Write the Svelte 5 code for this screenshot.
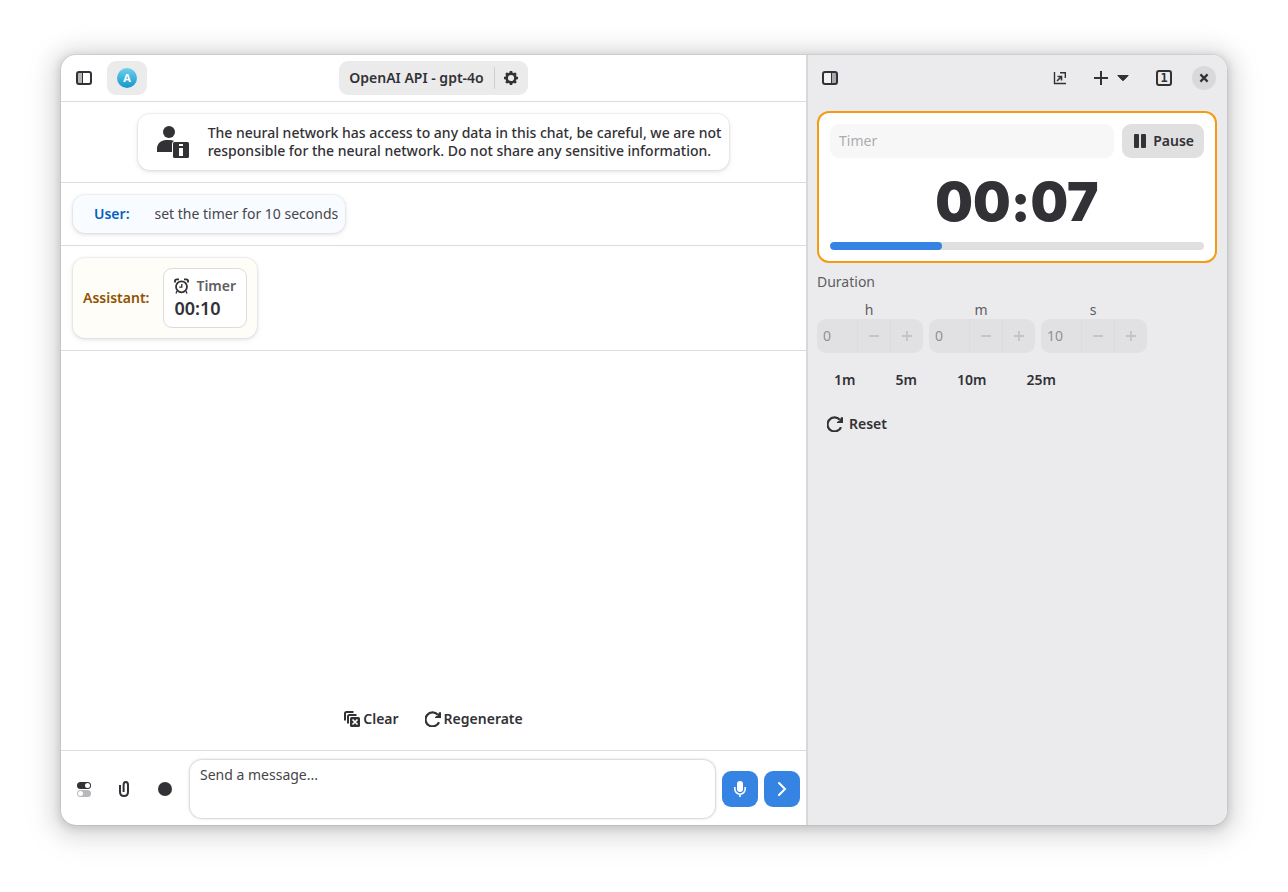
<script>
  let message = $state('');
  let title = $state('');
  const elapsed = 30;
  const fields = [
    { unit: 'h', value: 0 },
    { unit: 'm', value: 0 },
    { unit: 's', value: 10 }
  ];
  const presets = ['1m', '5m', '10m', '25m'];
</script>

{#snippet reload()}
  <svg width="16" height="16" viewBox="0 0 16 16" aria-hidden="true">
    <path d="M14 11.2A7 7 0 1 1 12.8 3.8" fill="none" stroke="currentColor" stroke-width="2.2" />
    <path d="M16 1.2V7H10V6L12.6 4.6L14 1.2Z" fill="currentColor" />
  </svg>
{/snippet}

<div class="window">
  <main class="chat">
    <header class="bar">
      <div class="start">
        <button class="flat" aria-label="Toggle sidebar">
          <svg width="16" height="16" viewBox="0 0 16 16">
            <rect x="1.5" y="2.5" width="5" height="11" fill="#b5b4ba" />
            <rect x="1" y="2" width="14" height="12" rx="2" fill="none" stroke="currentColor" stroke-width="2" />
            <path d="M6.5 2V14" stroke="currentColor" />
          </svg>
        </button>
        <button class="profile" aria-label="Profile"><span class="avatar">A</span></button>
      </div>
      <div class="model">
        <button class="name">OpenAI API - gpt-4o</button>
        <span class="split"></span>
        <button class="gear" aria-label="Settings">
          <svg width="16" height="16" viewBox="0 0 16 16">
            <circle cx="8" cy="8" r="4.4" fill="none" stroke="currentColor" stroke-width="2.6" />
            <path d="M8 1V3.2M8 12.8V15M1 8H3.2M12.8 8H15M3.1 3.1L4.6 4.6M11.4 11.4L12.9 12.9M3.1 12.9L4.6 11.4M11.4 4.6L12.9 3.1" stroke="currentColor" stroke-width="2.6" />
          </svg>
        </button>
      </div>
      <div></div>
    </header>

    <section class="row center">
      <div class="card notice">
        <svg width="32" height="32" viewBox="0 0 32 32" aria-hidden="true">
          <circle cx="12" cy="6" r="6" fill="currentColor" />
          <path d="M0 24V26H15V18Q15 15.5 17.2 15Q15 14 12 14H9C4 14 0 18 0 22.5Z" fill="currentColor" />
          <rect x="16" y="16" width="16" height="16" rx="1.5" fill="currentColor" />
          <path d="M22 18H26V20H22ZM22 22H26V30H22Z" fill="#fff" />
        </svg>
        <p>The neural network has access to any data in this chat, be careful, we are not<br />responsible for the neural network. Do not share any sensitive information.</p>
      </div>
    </section>

    <section class="row">
      <div class="card user">
        <b>User:</b>
        <span>set the timer for 10 seconds</span>
      </div>
    </section>

    <section class="row">
      <div class="card assistant">
        <b>Assistant:</b>
        <div class="widget">
          <div class="caption">
            <svg width="16" height="16" viewBox="0 0 16 16" aria-hidden="true">
              <circle cx="7.5" cy="8.8" r="5.5" fill="none" stroke="currentColor" stroke-width="1.8" />
              <path d="M1 4.6V3Q1 1.4 2.8 1.4H5M14 4.6V3Q14 1.4 12.2 1.4H10" fill="none" stroke="currentColor" stroke-width="1.9" />
              <path d="M7.8 6V9.2H5.2M3 13L2 15.4M12 13L13 15.4" fill="none" stroke="currentColor" stroke-width="1.3" />
            </svg>
            <span>Timer</span>
          </div>
          <strong>00:10</strong>
        </div>
      </div>
    </section>

    <div class="actions">
      <button>
        <svg width="16" height="16" viewBox="0 0 16 16" aria-hidden="true">
          <path d="M1 9.5V2.5Q1 1 2.5 1H9.5M4 12.5V5.5Q4 4 5.5 4H12.5" fill="none" stroke="currentColor" stroke-width="2" />
          <rect x="6" y="6" width="10" height="10" rx="1.5" fill="currentColor" />
          <path d="M8.5 8.5L13.5 13.5M13.5 8.5L8.5 13.5" stroke="#fff" stroke-width="1.7" />
        </svg>
        Clear
      </button>
      <button>{@render reload()}Regenerate</button>
    </div>

    <footer class="composer">
      <div class="tools">
        <button class="flat" aria-label="Options">
          <svg width="16" height="16" viewBox="0 0 16 16">
            <rect x="1" y="1" width="14" height="7" rx="3.5" fill="currentColor" />
            <circle cx="11.5" cy="4.5" r="2.5" fill="#fff" />
            <rect x="1" y="9" width="14" height="7" rx="3.5" fill="#b9b8bc" />
            <circle cx="4.5" cy="12.5" r="2.5" fill="#fff" />
          </svg>
        </button>
        <button class="flat" aria-label="Attach file">
          <svg width="16" height="16" viewBox="0 0 16 16">
            <path d="M4 4V11Q4 15 8 15Q12 15 12 11V4Q12 1 9.8 1Q7.6 1 7.6 4V11" fill="none" stroke="currentColor" stroke-width="2" />
          </svg>
        </button>
        <button class="flat" aria-label="Record">
          <svg width="16" height="16" viewBox="0 0 16 16"><circle cx="9" cy="8" r="7" fill="currentColor" /></svg>
        </button>
      </div>
      <textarea aria-label="Message" placeholder="Send a message..." bind:value={message}></textarea>
      <button class="blue" aria-label="Voice input">
        <svg width="16" height="16" viewBox="0 0 16 16">
          <rect x="5" y="0" width="6" height="11" rx="3" fill="currentColor" />
          <path d="M2.8 6V8A5.2 5.2 0 0 0 13.2 8V6M8 13V16" fill="none" stroke="currentColor" stroke-width="1.6" />
        </svg>
      </button>
      <button class="blue" aria-label="Send">
        <svg width="16" height="16" viewBox="0 0 16 16">
          <path d="M5 2L11 8L5 14" fill="none" stroke="currentColor" stroke-width="2" stroke-linecap="round" />
        </svg>
      </button>
    </footer>
  </main>

  <aside class="panel">
    <header class="bar2">
      <button class="flat" aria-label="Toggle panel">
        <svg width="16" height="16" viewBox="0 0 16 16">
          <rect x="1.5" y="2.5" width="13" height="11" fill="#f1f1f2" />
          <rect x="10" y="2.5" width="4.5" height="11" fill="#a9a8ae" />
          <rect x="1" y="2" width="14" height="12" rx="2" fill="none" stroke="currentColor" stroke-width="2" />
          <path d="M9.5 2V14" stroke="currentColor" />
        </svg>
      </button>
      <div class="end">
        <button class="flat" aria-label="Open in window">
          <svg width="16" height="16" viewBox="0 0 16 16">
            <path d="M2.5 2V13.5H14M8 2.7H13.3V8" fill="none" stroke="currentColor" stroke-width="1.4" />
            <path d="M5 11L9 7M5.5 6.5H9.5V10.5" fill="none" stroke="currentColor" stroke-width="1.6" />
          </svg>
        </button>
        <div class="add">
          <button aria-label="New tab">
            <svg width="16" height="16" viewBox="0 0 16 16"><path d="M8 1V15M1 8H15" stroke="currentColor" stroke-width="2" /></svg>
          </button>
          <button aria-label="New tab menu">
            <svg width="16" height="16" viewBox="0 0 16 16"><path d="M2.8 5.5H13.2L8.4 10.5Q8 10.9 7.6 10.5Z" fill="currentColor" stroke="currentColor" stroke-linejoin="round" /></svg>
          </button>
        </div>
        <button class="flat" aria-label="Tabs">
          <span class="count">1</span>
        </button>
        <button class="close" aria-label="Close">
          <svg width="16" height="16" viewBox="0 0 16 16"><path d="M4.4 4.4L11.6 11.6M11.6 4.4L4.4 11.6" stroke="currentColor" stroke-width="2.2" /></svg>
        </button>
      </div>
    </header>

    <div class="content">
      <section class="timer">
        <div class="head">
          <input type="text" aria-label="Timer name" placeholder="Timer" bind:value={title} />
          <button class="pause">
            <svg width="16" height="16" viewBox="0 0 16 16" aria-hidden="true">
              <rect x="2" y="1" width="5" height="14" rx="1" fill="currentColor" />
              <rect x="9" y="1" width="5" height="14" rx="1" fill="currentColor" />
            </svg>
            Pause
          </button>
        </div>
        <div class="time">00:07</div>
        <div class="track"><div class="fill" style="width: {elapsed}%"></div></div>
      </section>

      <div class="heading">Duration</div>
      <div class="spins">
        {#each fields as f}
          <div class="field">
            <label for="dur-{f.unit}">{f.unit}</label>
            <div class="spin">
              <input id="dur-{f.unit}" type="text" value={f.value} disabled />
              <button disabled aria-label="Decrease">
                <svg width="16" height="16" viewBox="0 0 16 16"><path d="M3 8H13" stroke="currentColor" stroke-width="2" /></svg>
              </button>
              <button disabled aria-label="Increase">
                <svg width="16" height="16" viewBox="0 0 16 16"><path d="M3 8H13M8 3V13" stroke="currentColor" stroke-width="2" /></svg>
              </button>
            </div>
          </div>
        {/each}
      </div>
      <div class="presets">
        {#each presets as p}<button>{p}</button>{/each}
      </div>
      <button class="reset">{@render reload()}Reset</button>
    </div>
  </aside>
</div>

<style>
  :global(body) { background: #fff; }
  * { box-sizing: border-box; }
  button, input, textarea {
    font: inherit;
    color: inherit;
    border: 0;
    background: none;
    padding: 0;
    margin: 0;
  }
  button { display: flex; align-items: center; justify-content: center; font-weight: 600; white-space: nowrap; }
  svg { flex: none; display: block; }
  b { font-weight: 600; }

  .window {
    display: grid;
    grid-template-columns: minmax(0, 1fr) 421px;
    min-height: calc(100vh - 122px);
    margin: 55px 61px 67px;
    border-radius: 15px;
    overflow: hidden;
    background: #fff;
    color: #323136;
    font: 14px/20px "Noto Sans", sans-serif;
    box-shadow: 0 2px 8px 2px rgba(0, 0, 0, 0.13), 0 3px 20px 10px rgba(0, 0, 0, 0.09), 0 6px 32px 16px rgba(0, 0, 0, 0.04), 0 0 0 1px rgba(0, 0, 0, 0.05);
  }
  .chat { display: flex; flex-direction: column; }
  .bar {
    display: grid;
    grid-template-columns: 1fr auto 1fr;
    align-items: center;
    height: 47px;
    padding: 0 6px;
    border-bottom: 1px solid #dcdcdc;
  }
  .start { display: flex; gap: 6px; }
  .flat { width: 34px; height: 34px; border-radius: 9px; }
  .profile { width: 40px; height: 34px; border-radius: 9px; background: #ebebeb; }
  .avatar {
    width: 20px;
    height: 20px;
    border-radius: 50%;
    background: linear-gradient(#6fd0ee, #1297c8);
    color: #fff;
    font-size: 11px;
    font-weight: 700;
  }
  .model { display: flex; align-items: center; height: 34px; border-radius: 9px; background: #ebebeb; }
  .name { padding: 0 10px; height: 34px; }
  .split { width: 1px; height: 22px; background: #cfcfd0; }
  .gear { width: 33px; height: 34px; }

  .row { display: flex; padding: 12px; border-bottom: 1px solid #dcdcdc; }
  .center { justify-content: center; }
  .card {
    display: flex;
    align-items: center;
    border-radius: 12px;
    background: #fff;
    box-shadow: 0 0 0 1px rgba(0, 0, 0, 0.03), 0 1px 3px 1px rgba(0, 0, 0, 0.07), 0 2px 6px 2px rgba(0, 0, 0, 0.03);
  }
  .notice { gap: 19px; padding: 10px 8px 10px 19px; font-weight: 500; line-height: 18px; }
  .notice p { margin: 0; }
  .user { min-height: 38px; gap: 25px; padding: 0 7px 0 21px; background: #f8fbff; }
  .user b { color: #0461be; }
  .user span { color: #464549; }
  .assistant { gap: 14px; padding: 10px; background: #fffdf8; }
  .assistant b { color: #905300; }
  .widget { padding: 7px 10px; border: 1px solid #dcdcdc; border-radius: 9px; background: #fff; }
  .caption { display: flex; align-items: center; gap: 6px; font-weight: 600; }
  .caption span { color: #5e5d61; }
  .widget strong { display: block; font-size: 18px; line-height: 24px; font-weight: 600; }

  .actions { display: flex; align-items: flex-end; justify-content: center; flex: 1; gap: 26px; padding-bottom: 14px; }
  .actions button { gap: 3px; height: 34px; }

  .composer { display: flex; align-items: center; gap: 6px; padding: 9px 6px 7px; border-top: 1px solid #dcdcdc; }
  .tools { display: flex; gap: 6px; margin-right: 3px; }
  textarea {
    flex: 1;
    min-width: 0;
    height: 58px;
    margin-right: 1px;
    padding: 5px 10px;
    border-radius: 12px;
    resize: none;
    background: #fff;
    box-shadow: 0 0 0 1px rgba(0, 0, 0, 0.06), 0 0 3px 1px rgba(0, 0, 0, 0.12);
  }
  textarea::placeholder { color: #464549; opacity: 1; }
  .blue { width: 36px; height: 36px; border-radius: 9px; background: #3584e4; color: #fff; }

  .panel { border-left: 2px solid #d8d8db; background: #ebebed; }
  .bar2 { display: flex; align-items: center; justify-content: space-between; height: 46px; padding: 0 11px 0 5px; }
  .end { display: flex; align-items: center; }
  .add { display: flex; gap: 6px; margin: 0 16px; }
  .count {
    width: 16px;
    height: 16px;
    border: 2px solid currentColor;
    border-radius: 3px;
    font: 700 12px/12px "DejaVu Sans Mono", monospace;
  }
  .close { width: 24px; height: 24px; margin-left: 11px; border-radius: 50%; background: #d9d9db; }

  .content { padding: 10px 10px 10px 9px; }
  .timer { padding: 11px; border: 2px solid #f39c12; border-radius: 12px; background: #fff; }
  .head { display: flex; gap: 8px; }
  .head input { flex: 1; min-width: 0; height: 34px; padding: 0 9px 1px; border-radius: 9px; background: #f7f7f7; }
  .head input::placeholder { color: #acacae; opacity: 1; }
  .pause { gap: 5px; height: 34px; padding: 0 10px; border-radius: 9px; background: #e0e0e0; }
  .time {
    height: 84px;
    text-align: center;
    font: 900 53px/88px Inter, sans-serif;
    font-feature-settings: "calt" 0;
  }
  .track { height: 8px; border-radius: 4px; background: #e0e0e0; overflow: hidden; }
  .fill { height: 8px; border-radius: 4px; background: #3584e4; }

  .heading { margin: 9px 0 8px; color: #5e5d61; }
  .spins { display: flex; gap: 6px; }
  .field { width: 106px; }
  .field label { display: block; height: 19px; padding-right: 2px; text-align: center; color: #5e5d61; }
  .spin { display: flex; height: 34px; border-radius: 9px; background: #e1e1e3; color: #919093; }
  .spin input { flex: 1; min-width: 0; padding: 0 6px; }
  .spin button { width: 33px; border-left: 1px solid #dcdcdf; color: #c5c5c8; }
  .presets { display: flex; gap: 6px; margin: 10px 0; }
  .presets button { height: 34px; padding: 0 17px; }
  .reset { gap: 6px; height: 34px; padding: 0 10px; }
</style>
